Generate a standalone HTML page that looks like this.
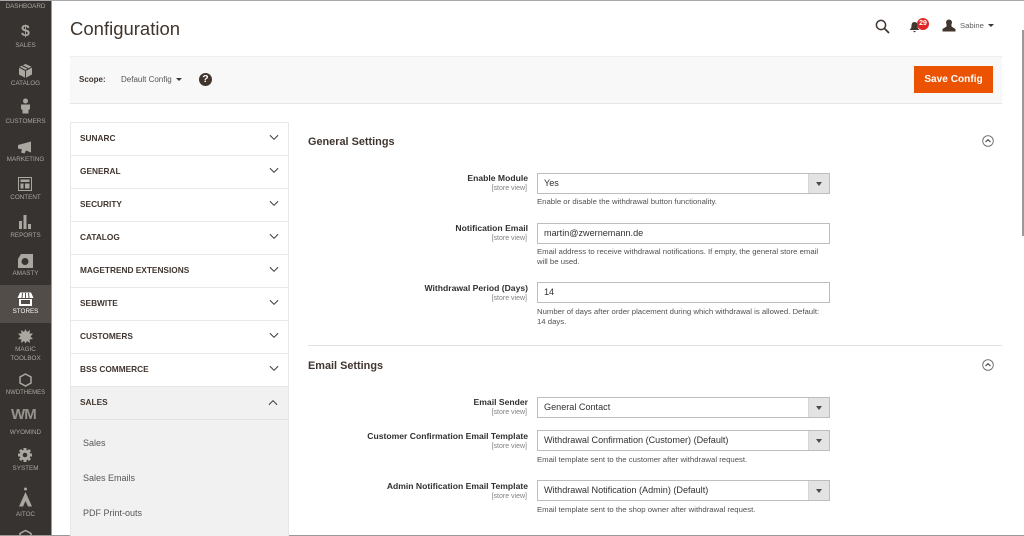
<!DOCTYPE html>
<html><head><meta charset="utf-8"><style>
html,body{margin:0;padding:0}
body{width:1024px;height:536px;overflow:hidden;background:#fff;position:relative;font-family:"Liberation Sans",sans-serif;color:#303030}
#w{position:absolute;left:0;top:0;width:1024px;height:536px;filter:blur(.35px);overflow:hidden}
.a{position:absolute;white-space:nowrap}
.nav{position:absolute;left:0;width:51px;text-align:center;font-size:6.3px;color:#aaa6a0;white-space:nowrap}
.lbl{position:absolute;right:496px;font-size:8.6px;font-weight:bold;color:#303030;white-space:nowrap;text-align:right;margin-top:1px}
.sv{position:absolute;right:497px;font-size:7px;color:#808080;white-space:nowrap;margin-top:2px}
.in{position:absolute;left:537px;width:291px;height:19px;border:1px solid #bdbdbd;background:#fff;font-size:9.1px;line-height:19px;color:#303030;text-indent:6px;white-space:nowrap}
.dd{position:absolute;right:0;top:0;width:20px;height:19px;background:#e3e3e3;border-left:1px solid #d6d6d6}
.dd:after{content:"";position:absolute;left:7px;top:8px;border:3px solid transparent;border-top:4px solid #514943;border-bottom:0}
.nt{position:absolute;left:537px;width:300px;font-size:7.75px;line-height:10px;color:#505050;margin-top:1px}
.tab{position:absolute;left:70px;width:219px;height:33px;border-top:1px solid #eaeaea;border-left:1px solid #e8e8e8;border-right:1px solid #e8e8e8;background:#fff;box-sizing:border-box}
.tab b{position:absolute;left:9px;top:10px;font-size:8.3px;color:#41362f;white-space:nowrap}
.tab svg{position:absolute;left:198px;top:11px}
.sub{position:absolute;left:83px;font-size:9px;color:#555}
h2{position:absolute;margin:0;left:308px;font-size:10.9px;font-weight:bold;color:#41362f;white-space:nowrap}
</style></head><body><div id="w">

<div class="a" style="left:0;top:0;width:51px;height:536px;background:#373330"></div>
<div class="a" style="left:51px;top:0;width:1px;height:536px;background:#9a9a9a"></div>
<div class="a" style="left:0;top:285px;width:51px;height:38px;background:#524d49"></div>
<div class="a" style="left:0;top:0;width:1024px;height:1px;background:#aaa"></div>
<div class="a" style="left:0;top:535px;width:1024px;height:1px;background:#999"></div>
<div class="a" style="left:1022px;top:30px;width:2px;height:206px;background:#999"></div>

<div class="nav" style="top:3px">DASHBOARD</div>
<div class="nav" style="top:25px;font-size:16px;font-weight:bold;left:0;color:#aaa6a0;line-height:14px">$</div>
<div class="nav" style="top:42px">SALES</div>
<svg class="a" style="left:18px;top:63px" width="15" height="15" viewBox="0 0 15 15"><path d="M7.5 1L14 4v7.500L7.500 15 1 11.500V4z" fill="#aaa6a0"/><path d="M1 4l6.500 3.500L14 4M7.500 7.500V15M4 2.500l6.500 3.200" stroke="#373330" fill="none"/></svg>
<div class="nav" style="top:80px">CATALOG</div>
<svg class="a" style="left:20px;top:98px" width="11" height="16" viewBox="0 0 11 16"><circle cx="5.500" cy="3" r="2.500" fill="#aaa6a0"/><path d="M1 6.500h9v4.500l-1.500 1V15.500h-6V12L1 11z" fill="#aaa6a0"/></svg>
<div class="nav" style="top:118px">CUSTOMERS</div>
<svg class="a" style="left:17px;top:141px" width="16" height="13" viewBox="0 0 16 13"><path d="M1 4l13-3.500v11L9 9.500 7.500 12.500 4 11.500 5 8.500 1 7.500z" fill="#aaa6a0"/></svg>
<div class="nav" style="top:156px">MARKETING</div>
<svg class="a" style="left:18px;top:177px" width="14" height="14" viewBox="0 0 14 14"><path d="M.5.500h13v13H.5z" fill="none" stroke="#aaa6a0"/><path d="M2.500 2.500h9v2.500h-9zM2.500 6.500h3v5h-3zM7 6.500h4.500v5H7z" fill="#aaa6a0"/></svg>
<div class="nav" style="top:194px">CONTENT</div>
<svg class="a" style="left:18px;top:214px" width="14" height="15" viewBox="0 0 14 15"><path d="M1 7h3v8H1zM5.500 1h3v14h-3zM10 10h3v5h-3z" fill="#aaa6a0"/></svg>
<div class="nav" style="top:232px">REPORTS</div>
<svg class="a" style="left:17px;top:253px" width="16" height="15" viewBox="0 0 16 15"><path d="M4 1H16v14H1V6z" fill="#aaa6a0"/><circle cx="8" cy="8.500" r="3.500" fill="#373330"/></svg>
<div class="nav" style="top:270px">AMASTY</div>
<svg class="a" style="left:17px;top:292px" width="17" height="14" viewBox="0 0 17 14"><path d="M3 .5h11l2.500 5.500H.5z" fill="#fff"/><path d="M5.500 1L5 6M8.500 1v5M11.500 1l.5 5" stroke="#524d49"/><path d="M2 7h13v7H2z" fill="#fff"/><path d="M4 8h9v4H4z" fill="#524d49"/></svg>
<div class="nav" style="top:308px;color:#fff">STORES</div>
<svg class="a" style="left:18px;top:329px" width="15" height="15" viewBox="0 0 15 15"><path d="M7.500 0l1.500 3 3-2-.5 3.500 3.500 0-2.500 3 2.500 2.500-3.500.5.500 3.500-3-2-1.500 2.500-1.500-2.500-3 2 .5-3.500-3.500-.5 2.500-2.500-2.500-3 3.500 0L3 1l3 2z" fill="#aaa6a0"/></svg>
<div class="nav" style="top:346px">MAGIC</div>
<div class="nav" style="top:355px">TOOLBOX</div>
<svg class="a" style="left:19px;top:373px" width="13" height="14" viewBox="0 0 13 14"><path d="M6.500 1L12 4v6L6.500 13 1 10V4z" fill="none" stroke="#aaa6a0" stroke-width="1.500"/></svg>
<div class="nav" style="top:390px;font-size:6px">NWDTHEMES</div>
<div class="a" style="left:11px;top:408px;width:30px;height:14px;font:bold 15px/14px 'Liberation Sans',sans-serif;color:#96928d;letter-spacing:-.9px">WM</div>
<div class="nav" style="top:429px">WYOMIND</div>
<svg class="a" style="left:17px;top:447px" width="16" height="16" viewBox="0 0 16 16"><path d="M8 1v14M1 8h14M3 3l10 10M13 3L3 13" stroke="#aaa6a0" stroke-width="3"/><circle cx="8" cy="8" r="5.300" fill="#aaa6a0"/><circle cx="8" cy="8" r="2.300" fill="#373330"/></svg>
<div class="nav" style="top:465px">SYSTEM</div>
<svg class="a" style="left:18px;top:487px" width="15" height="20" viewBox="0 0 15 20"><circle cx="7.500" cy="2" r="1.500" fill="#aaa6a0"/><path d="M7.500 5L14 19.500H10L7.500 14 5 19.500H1z" fill="#aaa6a0"/></svg>
<div class="nav" style="top:511px">AITOC</div>
<svg class="a" style="left:19px;top:529px" width="13" height="7" viewBox="0 0 13 7"><path d="M1 7V4.500L6.500 1.500 12 4.500V7" fill="none" stroke="#aaa6a0" stroke-width="1.500"/></svg>

<div class="a" style="left:70px;top:18px;font-size:18.500px;line-height:22px;color:#41362f">Configuration</div>

<svg class="a" style="left:875px;top:19px" width="15" height="15" viewBox="0 0 15 15"><circle cx="6" cy="6" r="4.600" fill="none" stroke="#41362f" stroke-width="1.500"/><path d="M9.500 9.500L14 14" stroke="#41362f" stroke-width="1.800"/></svg>
<svg class="a" style="left:909px;top:21px" width="11" height="12" viewBox="0 0 11 12"><path d="M5.500 1C3 1 2.500 3 2.500 5S1.500 8 .5 9h10c-1-1-2-2-2-4S8 1 5.500 1z" fill="#41362f"/><path d="M4 10h3L5.500 11.500z" fill="#41362f"/></svg>
<div class="a" style="left:917px;top:18px;width:12px;height:12px;border-radius:6px;background:#e22626;color:#fff;font-size:7px;font-weight:bold;line-height:12px;text-align:center">29</div>
<svg class="a" style="left:942px;top:19px" width="14" height="13" viewBox="0 0 14 13"><circle cx="7" cy="3.500" r="3" fill="#41362f"/><path d="M4.500 5.500h5V7.500L13.500 10v2.500H.5V10L4.500 7.500z" fill="#41362f"/></svg>
<div class="a" style="left:960px;top:20px;font-size:7.700px;line-height:11px;color:#5f5f5f">Sabine</div>
<div class="a" style="left:988px;top:24px;border:3px solid transparent;border-top:3.500px solid #41362f;border-bottom:0"></div>

<div class="a" style="left:70px;top:56px;width:932px;height:46px;background:#f8f8f8;border-top:1px solid #eee;border-bottom:1px solid #e6e6e6"></div>
<div class="a" style="left:79px;top:74px;font-size:8px;font-weight:bold;line-height:12px;color:#41362f">Scope:</div>
<div class="a" style="left:121px;top:74px;font-size:8px;line-height:12px;color:#555">Default Config</div>
<div class="a" style="left:176px;top:78px;border:3px solid transparent;border-top:3.500px solid #41362f;border-bottom:0"></div>
<div class="a" style="left:199px;top:73px;width:13px;height:13px;border-radius:7px;background:#41362f;color:#fff;font-size:10.500px;font-weight:bold;line-height:13px;text-align:center">?</div>
<div class="a" style="left:914px;top:66px;width:79px;height:27px;background:#eb5202;color:#fff;font-size:10.100px;font-weight:bold;line-height:27px;text-align:center">Save Config</div>

<div class="tab" style="top:122px"><b>SUNARC</b><svg width="10" height="7" viewBox="0 0 11 7"><path d="M1 1l4.500 4.500L10 1" fill="none" stroke="#41362f" stroke-width="1.100"/></svg></div>
<div class="tab" style="top:155px"><b>GENERAL</b><svg width="10" height="7" viewBox="0 0 11 7"><path d="M1 1l4.500 4.500L10 1" fill="none" stroke="#41362f" stroke-width="1.100"/></svg></div>
<div class="tab" style="top:188px"><b>SECURITY</b><svg width="10" height="7" viewBox="0 0 11 7"><path d="M1 1l4.500 4.500L10 1" fill="none" stroke="#41362f" stroke-width="1.100"/></svg></div>
<div class="tab" style="top:221px"><b>CATALOG</b><svg width="10" height="7" viewBox="0 0 11 7"><path d="M1 1l4.500 4.500L10 1" fill="none" stroke="#41362f" stroke-width="1.100"/></svg></div>
<div class="tab" style="top:254px"><b>MAGETREND EXTENSIONS</b><svg width="10" height="7" viewBox="0 0 11 7"><path d="M1 1l4.500 4.500L10 1" fill="none" stroke="#41362f" stroke-width="1.100"/></svg></div>
<div class="tab" style="top:287px"><b>SEBWITE</b><svg width="10" height="7" viewBox="0 0 11 7"><path d="M1 1l4.500 4.500L10 1" fill="none" stroke="#41362f" stroke-width="1.100"/></svg></div>
<div class="tab" style="top:320px"><b>CUSTOMERS</b><svg width="10" height="7" viewBox="0 0 11 7"><path d="M1 1l4.500 4.500L10 1" fill="none" stroke="#41362f" stroke-width="1.100"/></svg></div>
<div class="tab" style="top:353px"><b>BSS COMMERCE</b><svg width="10" height="7" viewBox="0 0 11 7"><path d="M1 1l4.500 4.500L10 1" fill="none" stroke="#41362f" stroke-width="1.100"/></svg></div>
<div class="a" style="left:70px;top:386px;width:219px;height:150px;background:#f1f1f1;border-top:1px solid #e6e6e6;border-left:1px solid #e6e6e6;border-right:1px solid #e6e6e6;box-sizing:border-box"></div>
<div class="a" style="left:70px;top:419px;width:219px;height:1px;background:#e3e3e3"></div>
<div class="a" style="left:80px;top:397px;font-size:8.300px;font-weight:bold;line-height:11px;color:#41362f">SALES</div>
<svg class="a" style="left:268px;top:399px" width="10" height="7" viewBox="0 0 11 7"><path d="M1 6l4.500-4.500L10 6" fill="none" stroke="#41362f" stroke-width="1.100"/></svg>
<div class="sub" style="top:438px">Sales</div>
<div class="sub" style="top:473px">Sales Emails</div>
<div class="sub" style="top:508px">PDF Print-outs</div>

<h2 style="top:136px">General Settings</h2>
<svg class="a" style="left:982px;top:135px" width="12" height="12" viewBox="0 0 12 12"><circle cx="6" cy="6" r="5.300" fill="none" stroke="#6a6a6a" stroke-width=".9"/><path d="M3.500 7L6 4.700 8.500 7" fill="none" stroke="#41362f"/></svg>

<div class="lbl" style="top:172px">Enable Module</div><div class="sv" style="top:183px">[store view]</div>
<div class="in" style="top:173px">Yes<span class="dd"></span></div>
<div class="nt" style="top:196px">Enable or disable the withdrawal button functionality.</div>

<div class="lbl" style="top:222px">Notification Email</div><div class="sv" style="top:233px">[store view]</div>
<div class="in" style="top:223px">martin@zwernemann.de</div>
<div class="nt" style="top:246px">Email address to receive withdrawal notifications. If empty, the general store email<br>will be used.</div>

<div class="lbl" style="top:282px">Withdrawal Period (Days)</div><div class="sv" style="top:293px">[store view]</div>
<div class="in" style="top:282px">14</div>
<div class="nt" style="top:306px">Number of days after order placement during which withdrawal is allowed. Default:<br>14 days.</div>

<div class="a" style="left:308px;top:345px;width:694px;height:1px;background:#e3e3e3"></div>
<h2 style="top:360px">Email Settings</h2>
<svg class="a" style="left:982px;top:359px" width="12" height="12" viewBox="0 0 12 12"><circle cx="6" cy="6" r="5.300" fill="none" stroke="#6a6a6a" stroke-width=".9"/><path d="M3.500 7L6 4.700 8.500 7" fill="none" stroke="#41362f"/></svg>

<div class="lbl" style="top:396px">Email Sender</div><div class="sv" style="top:407px">[store view]</div>
<div class="in" style="top:397px">General Contact<span class="dd"></span></div>

<div class="lbl" style="top:430px">Customer Confirmation Email Template</div><div class="sv" style="top:441px">[store view]</div>
<div class="in" style="top:430px">Withdrawal Confirmation (Customer) (Default)<span class="dd"></span></div>
<div class="nt" style="top:454px">Email template sent to the customer after withdrawal request.</div>

<div class="lbl" style="top:480px">Admin Notification Email Template</div><div class="sv" style="top:491px">[store view]</div>
<div class="in" style="top:480px">Withdrawal Notification (Admin) (Default)<span class="dd"></span></div>
<div class="nt" style="top:504px">Email template sent to the shop owner after withdrawal request.</div>

</div></body></html>
